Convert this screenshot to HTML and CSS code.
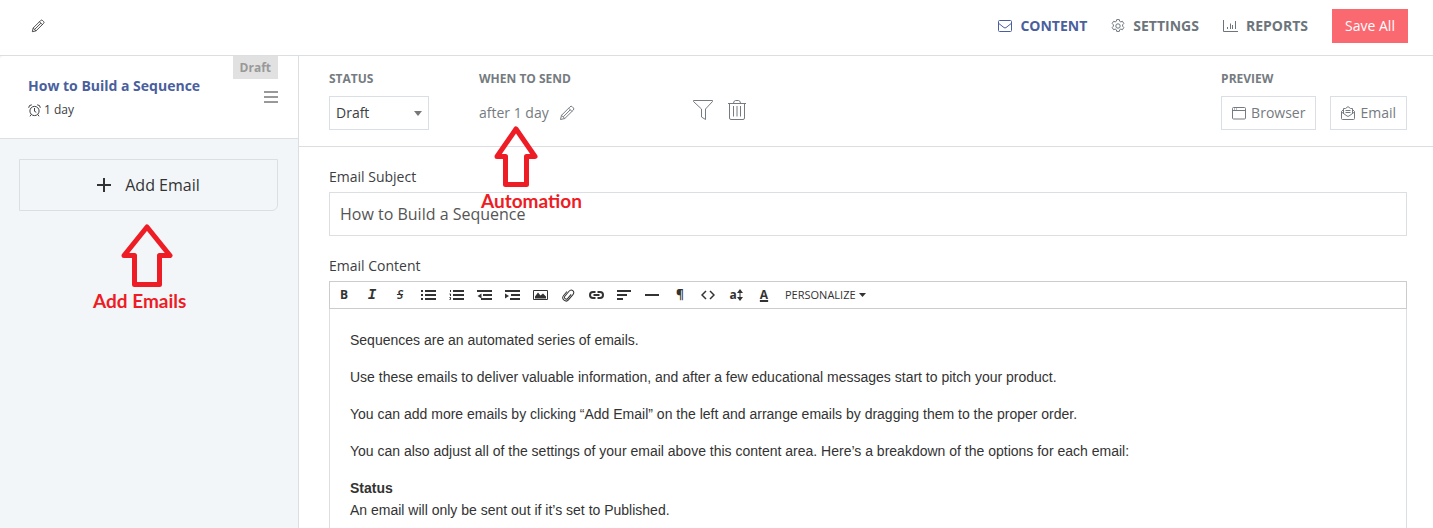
FILE: index.html
```html
<!DOCTYPE html>
<html lang="en">
<head>
    <meta charset="UTF-8">
    <meta name="viewport" content="width=device-width, initial-scale=1.0">
    <title>How to Build a Sequence</title>
    <link rel="stylesheet" href="styles.css">
</head>
<body>
    <!-- shared icons -->
    <svg class="sprite" aria-hidden="true">
        <symbol id="pencil" viewBox="0 0 16 16">
            <path d="M1.5 14.5l1-4.2L11 1.8a1.6 1.6 0 0 1 2.3 0l1 1a1.6 1.6 0 0 1 0 2.3l-8.500 8.400zM2.5 10.3l3.3 3.2M9.7 3.2l3.2 3.2M11.3 4.8l-7 7"/>
        </symbol>
    </svg>

    <header class="topbar">
        <button class="icon-btn dark" aria-label="Rename sequence"><svg class="icon" width="14" height="14"><use href="#pencil"/></svg></button>
        <nav class="tabs">
            <a href="#content" class="active">
                <svg class="icon" width="14" height="14" viewBox="0 0 14 14"><rect x=".5" y="1.500" width="13" height="11" rx="1"/><path d="M.8 4.500L6 8.600q1 .7 2 0l5.200-4.100"/></svg>
                CONTENT
            </a>
            <a href="#settings">
                <svg class="icon" width="14" height="14" viewBox="0 0 14 14"><circle cx="7" cy="7" r="2.200"/><path d="M5.700 .6h2.600l.4 1.700 1.100.6 1.700-.6 1.300 2.300-1.200 1.200v1.400l1.200 1.200-1.300 2.300-1.700-.6-1.100.6-.4 1.700H5.700l-.4-1.700-1.100-.6-1.700.6L1.200 8.400l1.200-1.200V5.800L1.200 4.600l1.300-2.300 1.700.6 1.100-.6z"/></svg>
                SETTINGS
            </a>
            <a href="#reports">
                <svg class="icon" width="15" height="14" viewBox="0 0 15 14"><path d="M.5 1v11.500H15M4.500 10V8M7.500 10V4.500M9.500 10V6M12.500 10V2"/></svg>
                REPORTS
            </a>
        </nav>
        <button class="save">Save All</button>
    </header>

    <div class="layout">
        <aside class="sidebar">
            <div class="email-card">
                <span class="badge">Draft</span>
                <div>
                    <a href="#email" class="email-title">How to Build a Sequence</a>
                    <div class="delay">
                        <svg class="icon" width="13" height="13" viewBox="0 0 13 13"><circle cx="6.500" cy="7" r="4.600"/><path d="M6.500 4v3.300l1.800 1M.7 3.800Q.6 1 3.800.8M12.300 3.800Q12.400 1 9.200.8M3.200 10.500l-1.200 1.800M9.800 10.500l1.200 1.800"/></svg>
                        1 day
                    </div>
                </div>
                <button class="icon-btn handle" aria-label="Reorder"><svg width="14" height="12" viewBox="0 0 14 12"><path d="M0 1h14M0 6h14M0 11h14"/></svg></button>
            </div>
            <div class="add-wrap">
                <button class="add-email">
                    <svg width="14" height="14" viewBox="0 0 14 14"><path d="M7 0v14M0 7h14"/></svg>
                    Add Email
                </button>
                <div class="note note-add">
                    <svg width="54" height="64" viewBox="0 0 54 64"><path d="M27 3L50 31.500H39.500V60.500H14.500V31.500H4z"/></svg>
                    <span>Add Emails</span>
                </div>
            </div>
        </aside>

        <main class="main">
            <section class="options">
                <div class="field status">
                    <label for="status">STATUS</label>
                    <div class="select">
                        <select id="status">
                            <option>Draft</option>
                            <option>Published</option>
                        </select>
                    </div>
                </div>
                <div class="field send">
                    <h2>WHEN TO SEND</h2>
                    <div class="when">
                        <span>after 1 day</span>
                        <button class="icon-btn" aria-label="Edit delay"><svg class="icon" width="16" height="16"><use href="#pencil"/></svg></button>
                    </div>
                    <div class="note note-auto">
                        <svg width="46" height="62" viewBox="0 0 46 62"><path d="M23 3L42 30.500H33.500V58.500H12.500V30.500H4z"/></svg>
                        <span>Automation</span>
                    </div>
                </div>
                <div class="actions">
                    <button class="icon-btn" aria-label="Filter"><svg class="icon" width="20" height="22" viewBox="0 0 20 22"><path d="M.5 1.500h19v1L12.500 10v10.500l-4-2.500v-8L.5 2.500z"/></svg></button>
                    <button class="icon-btn" aria-label="Delete"><svg class="icon" width="18" height="22" viewBox="0 0 18 22"><path d="M0 4.500h18M1.500 4.500V19q0 1.500 1.500 1.500h12q1.500 0 1.500-1.500V4.500M5.500 4q.5-2.500 2-2.500h3q1.500 0 2 2.500M5.500 7v10.500M9 7v10.500M12.500 7v10.500"/></svg></button>
                </div>
                <div class="field preview">
                    <h2>PREVIEW</h2>
                    <div class="preview-btns">
                        <button>
                            <svg class="icon" width="14" height="14" viewBox="0 0 14 14"><rect x=".5" y="1.500" width="13" height="11.500" rx="1"/><path d="M.5 4.500h13M2 3h1M4 3h1"/></svg>
                            Browser
                        </button>
                        <button>
                            <svg class="icon" width="14" height="14" viewBox="0 0 14 14"><path d="M2.500 3.500L.5 5.500v7q0 1 1 1h11q1 0 1-1v-7l-2-2M.5 6l5.500 4q1 .7 2 0l5.500-4M2.500 7.300V2.500h2L7 .6l2.500 1.900h2v4.800M4.500 4.500h5M4.500 6.500h5"/></svg>
                            Email
                        </button>
                    </div>
                </div>
            </section>

            <section class="compose">
                <label for="subject">Email Subject</label>
                <input id="subject" type="text" value="How to Build a Sequence">

                <h3>Email Content</h3>
                <div class="toolbar">
                    <button class="bold" aria-label="Bold">B</button>
                    <button class="italic" aria-label="Italic">I</button>
                    <button class="strike" aria-label="Strikethrough">S</button>
                    <button aria-label="Bulleted list"><svg width="15" height="10" viewBox="0 0 15 10"><path d="M0 1h2M0 5h2M0 9h2M4 1h11M4 5h11M4 9h11"/></svg></button>
                    <button aria-label="Numbered list"><svg width="15" height="10" viewBox="0 0 15 10"><path d="M4 1h11M4 5h11M4 9h11"/><path class="thin" d="M1.500 0v2M.5 4h1v2M.5 7.500h1v2h-1"/></svg></button>
                    <button aria-label="Outdent"><svg width="15" height="10" viewBox="0 0 15 10"><path d="M0 1h15M6 5h9M4 9h11"/><path class="solid" d="M4.500 3.500v5L.5 6z"/></svg></button>
                    <button aria-label="Indent"><svg width="15" height="10" viewBox="0 0 15 10"><path d="M0 1h15M6 5h9M5 9h10"/><path class="solid" d="M0 3.500v5L4 6z"/></svg></button>
                    <button aria-label="Image"><svg width="15" height="12" viewBox="0 0 15 12"><path class="thin" d="M.5 1.500h14v9H.5z"/><path class="solid" d="M2 9.500V7.500l3-4 2.500 3L10 4.500l3 3v2z"/></svg></button>
                    <button aria-label="Attach file"><svg width="14" height="14" viewBox="0 0 14 14"><g transform="rotate(40 7 7)"><path class="thin" d="M9 4.500v5.500q0 1.700-1.800 1.700T5.400 10V3.500Q5.400.6 7.900.6t2.600 2.900v7q0 3-3.200 3T4 10.500V5"/></g></svg></button>
                    <button aria-label="Link"><svg width="15" height="10" viewBox="0 0 15 10"><path d="M6.500 2H4a3 3 0 0 0 0 6h2.500M8.500 2H11a3 3 0 0 1 0 6H8.500M4.500 5h6"/></svg></button>
                    <button aria-label="Align"><svg width="14" height="10" viewBox="0 0 14 10"><path d="M0 1h14M0 5h10M0 9h6"/></svg></button>
                    <button aria-label="Horizontal rule"><svg width="14" height="10" viewBox="0 0 14 10"><path d="M0 5h14"/></svg></button>
                    <button class="bold" aria-label="Paragraph">¶</button>
                    <button aria-label="HTML"><svg class="code" width="14" height="10" viewBox="0 0 14 10"><path d="M5 1L1 5l4 4M9 1l4 4-4 4"/></svg></button>
                    <button class="size" aria-label="Font size">a<svg width="6" height="12" viewBox="0 0 6 12"><path class="thin" d="M3 2v8"/><path class="solid" d="M3 0l3 4H0zM3 12l3-4H0z"/></svg></button>
                    <button class="color" aria-label="Text color">A</button>
                    <button class="personalize">PERSONALIZE<svg width="7" height="4" viewBox="0 0 7 4"><path class="solid" d="M0 0h7L3.500 4z"/></svg></button>
                </div>
                <div class="editor" contenteditable="true" spellcheck="false">
                    <p>Sequences are an automated series of emails.</p>
                    <p>Use these emails to deliver valuable information, and after a few educational messages start to pitch your product.</p>
                    <p>You can add more emails by clicking “Add Email” on the left and arrange emails by dragging them to the proper order.</p>
                    <p>You can also adjust all of the settings of your email above this content area. Here’s a breakdown of the options for each email:</p>
                    <p><strong>Status</strong><br>An email will only be sent out if it’s set to Published.</p>
                </div>
            </section>
        </main>
    </div>
</body>
</html>
```
FILE: styles.css
```css
* {
    box-sizing: border-box;
}
body {
    margin: 0;
    height: 100vh;
    display: flex;
    flex-direction: column;
    overflow: hidden;
    font-family: 'Open Sans', sans-serif;
    font-size: 14px;
    line-height: 20px;
    color: #3c4043;
    background: #fff;
}
button, input, select {
    font: inherit;
    color: inherit;
}
button {
    padding: 0;
    border: none;
    background: none;
    cursor: pointer;
}
a {
    color: inherit;
    text-decoration: none;
}
h2, h3, p {
    margin: 0;
}
svg {
    flex: none;
    fill: none;
    stroke: currentColor;
}
.sprite {
    position: absolute;
    width: 0;
    height: 0;
}
.icon-btn {
    display: flex;
    color: #757b80;
}
.icon-btn.dark {
    color: #333;
}

/* top bar */
.topbar {
    display: flex;
    align-items: center;
    height: 56px;
    padding: 0 25px 4px 31px;
    border-bottom: 1px solid #dcdfe2;
}
.tabs {
    display: flex;
    gap: 24px;
    margin-left: auto;
    margin-right: 24px;
    font-weight: bold;
    color: #6c757b;
}
.tabs a {
    display: flex;
    align-items: center;
    gap: 8px;
}
.tabs .active {
    color: #4a5f9e;
}
.save {
    width: 76px;
    height: 34px;
    background: #fb6970;
    color: #fff;
}

.layout {
    flex: 1;
    display: flex;
    min-height: 0;
}

/* sidebar */
.sidebar {
    flex: none;
    width: 299px;
    border-right: 1px solid #dcdfe2;
    background: #f2f6f9;
}
.email-card {
    position: relative;
    display: flex;
    justify-content: space-between;
    height: 83px;
    padding: 20px 20px 0 28px;
    background: #fff;
    border-bottom: 1px solid #dcdfe2;
    border-top-left-radius: 4px;
}
.badge {
    position: absolute;
    top: 0;
    right: 20px;
    padding: 2px 7px 1px;
    background: #e1e1e1;
    color: #999;
    font-size: 12px;
    font-weight: bold;
}
.email-title {
    font-weight: bold;
    color: #4a5f9e;
}
.delay {
    display: flex;
    align-items: center;
    gap: 3px;
    margin-top: 4px;
    font-size: 12px;
}
.handle {
    align-self: flex-start;
    margin-top: 15px;
    color: #999;
}
.handle svg {
    stroke-width: 2;
}
.add-wrap {
    position: relative;
    padding: 20px 20px 0 19px;
}
.add-email {
    display: flex;
    align-items: center;
    justify-content: center;
    gap: 14px;
    width: 100%;
    height: 52px;
    border: 1px solid #dcdfe2;
    border-bottom-right-radius: 6px;
    font-size: 16px;
    color: #333;
}
.add-email svg {
    stroke-width: 2;
}

/* red callouts */
.note {
    position: absolute;
    display: flex;
    flex-direction: column;
    align-items: flex-start;
    color: #ee1c25;
    font-family: Lato, sans-serif;
    font-size: 19px;
    font-weight: bold;
    pointer-events: none;
}
.note svg {
    stroke-width: 5;
    stroke-linejoin: round;
    margin-bottom: 3px;
}
.note-add {
    top: 85px;
    left: 93px;
}
.note-auto {
    top: 57px;
    left: 2px;
}
.note-add svg {
    margin-left: 27px;
}
.note-auto svg {
    margin-left: 12px;
}

/* main column */
.main {
    flex: 1;
    min-width: 0;
    display: flex;
    flex-direction: column;
}
.options {
    display: flex;
    height: 91px;
    padding: 13px 26px 0 30px;
    border-bottom: 1px solid #dcdfe2;
    color: #757b80;
}
.field {
    position: relative;
}
.field label, .field h2 {
    display: block;
    font-size: 12px;
    font-weight: bold;
    margin-bottom: 7px;
}
.status {
    width: 150px;
}
.send {
    width: 214px;
}
.select {
    position: relative;
    width: 100px;
}
.select::after {
    content: "";
    position: absolute;
    top: 15px;
    right: 7px;
    border: 4px solid transparent;
    border-top: 5px solid #777;
    border-bottom: 0;
    pointer-events: none;
}
.select select {
    display: block;
    width: 100%;
    height: 34px;
    padding: 0 6px;
    border: 1px solid #d9dfe5;
    background: #fff;
    color: #3c4043;
    appearance: none;
}
.when {
    display: flex;
    align-items: center;
    gap: 10px;
    height: 34px;
}
.actions {
    display: flex;
    align-items: center;
    gap: 15px;
    height: 82px;
}
.preview {
    margin-left: auto;
}
.preview-btns {
    display: flex;
    gap: 14px;
}
.preview-btns button {
    display: flex;
    align-items: center;
    gap: 5px;
    height: 34px;
    padding: 0 10px;
    border: 1px solid #d9dfe5;
}

/* compose form */
.compose {
    flex: 1;
    display: flex;
    flex-direction: column;
    min-height: 0;
    padding: 20px 26px 0 30px;
}
.compose label, .compose h3 {
    font-size: 14px;
    font-weight: normal;
}
.compose input {
    height: 44px;
    margin: 5px 0 20px;
    padding: 0 10px;
    border: 1px solid #dcdfe2;
    font-size: 16px;
    color: #555;
}
.toolbar {
    display: flex;
    flex: none;
    height: 28px;
    margin-top: 5px;
    border: 1px solid #ccc;
    color: #333;
}
.toolbar button {
    display: flex;
    align-items: center;
    justify-content: center;
    width: 28px;
    font-size: 12px;
}
.toolbar svg {
    stroke-width: 2;
}
.toolbar .thin, .toolbar .code {
    stroke-width: 1;
}
.toolbar .code {
    stroke-width: 1.5;
}
.toolbar .solid {
    fill: currentColor;
    stroke: none;
}
.toolbar .bold, .toolbar .size, .toolbar .color {
    font-weight: bold;
}
.toolbar .italic {
    font-family: 'Liberation Mono', monospace;
    font-size: 14px;
    font-style: italic;
    font-weight: bold;
}
.toolbar .strike {
    font-style: italic;
    font-weight: 600;
    text-decoration: line-through;
}
.toolbar .color {
    text-decoration: underline;
    text-decoration-thickness: 2px;
}
.toolbar .personalize {
    width: auto;
    gap: 3px;
    margin-left: 7px;
    font-size: 11px;
}
.editor {
    flex: 1;
    min-height: 0;
    padding: 20px 20px 0;
    border: 1px solid #dcdfe2;
    border-top: none;
    border-bottom: none;
    outline: none;
    font-family: 'Liberation Sans', Arial, sans-serif;
    line-height: 22px;
    color: #333;
}
.editor p + p {
    margin-top: 15px;
}
```
